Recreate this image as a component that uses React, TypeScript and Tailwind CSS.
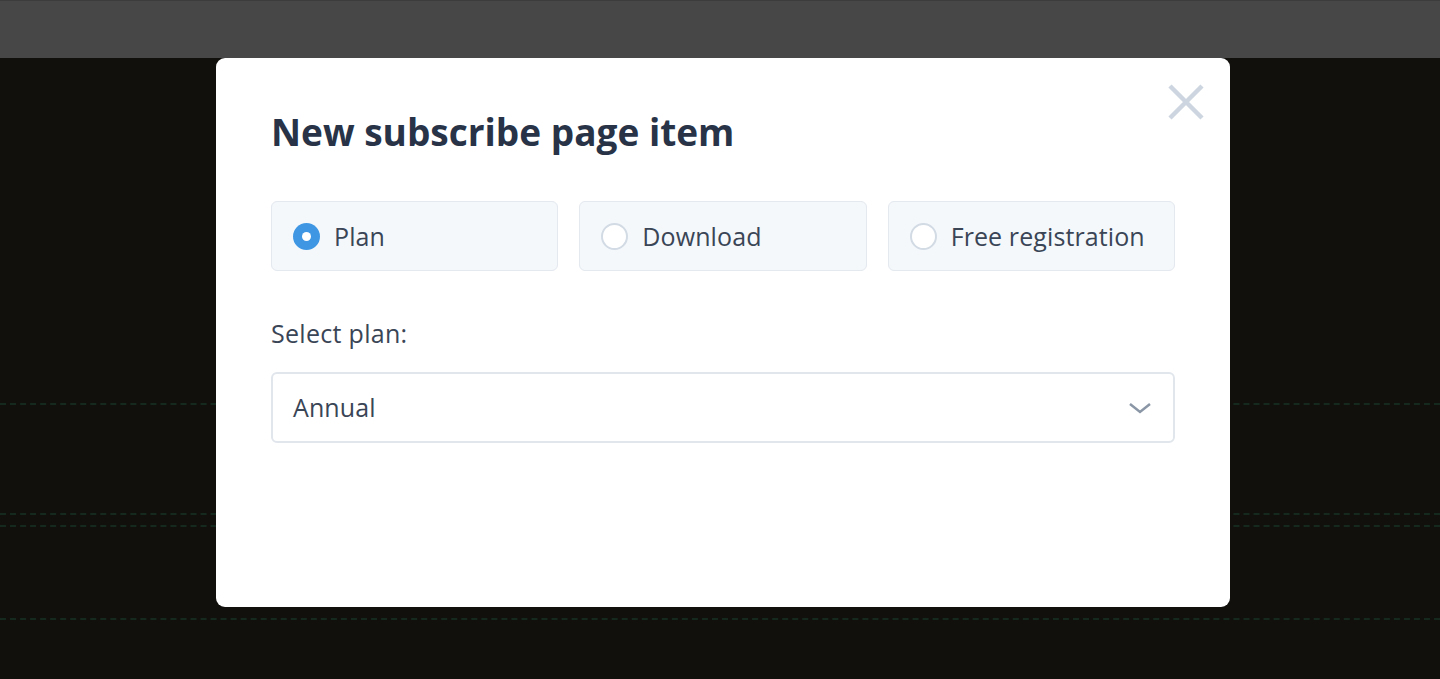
import { useState } from 'react'

const OPTIONS = ['Plan', 'Download', 'Free registration']

function Radio({ checked }: { checked: boolean }) {
  if (checked) {
    return (
      <span className="flex h-[27px] w-[27px] shrink-0 items-center justify-center rounded-full bg-[#3f97e3]">
        <span className="h-[9px] w-[9px] rounded-full bg-white" />
      </span>
    )
  }
  return <span className="h-[27px] w-[27px] shrink-0 rounded-full border-2 border-[#d2dae4] bg-white" />
}

export default function App() {
  const [selected, setSelected] = useState('Plan')

  return (
    <div className="flex h-[679px] w-full flex-col overflow-hidden bg-[#12100d] font-['Open_Sans',sans-serif]">
      {/* top bar */}
      <div className="h-[58px] shrink-0 border-t border-[#3c3c3c] bg-[#474747]" />

      {/* page behind the overlay */}
      <div className="relative flex-1">
        <div className="absolute inset-x-0 top-[345px] border-t-2 border-dashed border-[#15291f]" />
        <div className="absolute inset-x-0 top-[455px] border-t-2 border-dashed border-[#15291f]" />
        <div className="absolute inset-x-0 top-[467px] border-t-2 border-dashed border-[#15291f]" />
        <div className="absolute inset-x-0 top-[560px] border-t-2 border-dashed border-[#15291f]" />

        {/* modal */}
        <div className="absolute left-[216px] top-0 h-[549px] w-[1014px] rounded-[9px] bg-white px-[55px] pt-[50px]">
          <button className="absolute right-[24px] top-[24px] text-[#cdd6e0]">
            <svg width="40" height="40" viewBox="0 0 40 40" fill="none" stroke="currentColor" strokeWidth="4.5">
              <path d="M4 4 L36 36 M36 4 L4 36" />
            </svg>
          </button>

          <h2 className="text-[37px] font-bold leading-[48px] tracking-[0px] text-[#283347]">
            New subscribe page item
          </h2>

          <div className="mt-[45px] grid grid-cols-3 gap-[21px]">
            {OPTIONS.map(opt => (
              <button
                key={opt}
                onClick={() => setSelected(opt)}
                className="flex h-[70px] items-center gap-[14px] rounded-[6px] border border-[#e3e9ef] bg-[#f4f8fb] px-[21px] text-left"
              >
                <Radio checked={selected === opt} />
                <span className="text-[25px] leading-none tracking-[0.1px] text-[#3a4556]">{opt}</span>
              </button>
            ))}
          </div>

          <p className="mt-[48px] text-[25px] leading-[28px] tracking-[0.3px] text-[#3a4556]">Select plan:</p>

          <div className="mt-[25px] flex h-[71px] items-center justify-between rounded-[6px] border-2 border-[#e1e6ec] pl-[20px] pr-[21px]">
            <span className="text-[25px] tracking-[0.1px] text-[#3a4556]">Annual</span>
            <svg width="24" height="14" viewBox="0 0 24 14" fill="none" stroke="#8a96a6" strokeWidth="2.5">
              <path d="M2 3 L12 11 L22 3" />
            </svg>
          </div>
        </div>
      </div>
    </div>
  )
}
